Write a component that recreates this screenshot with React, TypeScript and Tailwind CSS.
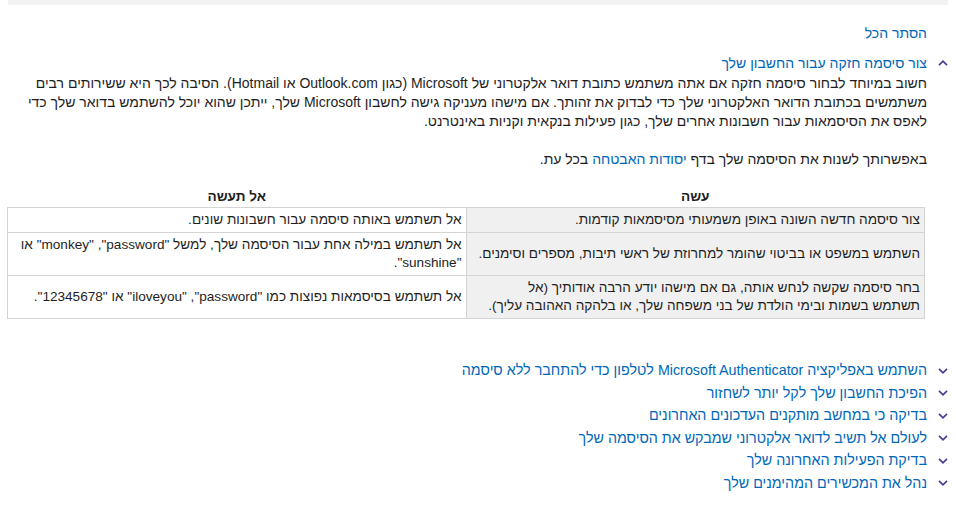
// Security tips page — RTL accordion with a do / don't table.

const topics = [
  "השתמש באפליקציה Microsoft Authenticator לטלפון כדי להתחבר ללא סיסמה",
  "הפיכת החשבון שלך לקל יותר לשחזור",
  "בדיקה כי במחשב מותקנים העדכונים האחרונים",
  "לעולם אל תשיב לדואר אלקטרוני שמבקש את הסיסמה שלך",
  "בדיקת הפעילות האחרונה שלך",
  "נהל את המכשירים המהימנים שלך",
];

// RLM keeps the quoted latin words in right-to-left order
const rlm = "\u200F";

function Chevron({ up }: { up?: boolean }) {
  return (
    <svg width="10" height="6" viewBox="0 0 10 6" className="shrink-0" aria-hidden="true">
      <polyline
        points={up ? "1,5.2 5,1.2 9,5.2" : "1,0.8 5,4.8 9,0.8"}
        fill="none"
        stroke="#4f3a99"
        strokeWidth="1.7"
      />
    </svg>
  );
}

export default function App() {
  return (
    <div
      dir="rtl"
      className="min-h-screen bg-white pb-4 font-['Segoe_UI','Liberation_Sans',sans-serif] text-[14px] text-[#1e1e1e]"
    >
      <div className="mx-[8px] h-[5px] bg-[#f2f2f2]" />

      <div className="pr-[8px] pl-[7px]">
        <div className="mt-[18px] pr-[21px] leading-[20px]">
          <a className="text-[#0067b8]">הסתר הכל</a>
        </div>

        {/* פריט פתוח */}
        <div className="mt-[10px] flex h-[20px] items-center gap-[11px]">
          <Chevron up />
          <span className="text-[14px] text-[#0067b8]">צור סיסמה חזקה עבור החשבון שלך</span>
        </div>

        <div className="pr-[21px]">
          <p className="mt-[1px] leading-[19px]">
            חשוב במיוחד לבחור סיסמה חזקה אם אתה משתמש כתובת דואר אלקטרוני של Microsoft (כגון Outlook.com או Hotmail). הסיבה לכך היא ששירותים רבים
            <br />
            משתמשים בכתובת הדואר האלקטרוני שלך כדי לבדוק את זהותך. אם מישהו מעניקה גישה לחשבון Microsoft שלך, ייתכן שהוא יוכל להשתמש בדואר שלך כדי
            <br />
            לאפס את הסיסמאות עבור חשבונות אחרים שלך, כגון פעילות בנקאית וקניות באינטרנט.
          </p>

          <p className="mt-[19px] leading-[19px]">
            באפשרותך לשנות את הסיסמה שלך בדף <a className="text-[#0067b8]">יסודות האבטחה</a> בכל עת.
          </p>
        </div>

        <table className="mt-[18px] mr-[23px] w-[918px] table-fixed border-collapse text-[13.6px] leading-[18px]">
          <thead>
            <tr className="h-[20px]">
              <th className="pb-[1px] text-center align-bottom font-bold">עשה</th>
              <th className="pb-[1px] text-center align-bottom font-bold">אל תעשה</th>
            </tr>
          </thead>
          <tbody>
            <tr>
              <td className="whitespace-nowrap border border-[#d4d4d4] bg-[#f0f0f0] px-[4px] py-[3px] text-right">
                צור סיסמה חדשה השונה באופן משמעותי מסיסמאות קודמות.
              </td>
              <td className="whitespace-nowrap border border-[#d4d4d4] px-[4px] py-[3px] text-right">
                אל תשתמש באותה סיסמה עבור חשבונות שונים.
              </td>
            </tr>
            <tr>
              <td className="whitespace-nowrap border border-[#d4d4d4] bg-[#f0f0f0] px-[4px] py-[3px] text-right">
                השתמש במשפט או בביטוי שהומר למחרוזת של ראשי תיבות, מספרים וסימנים.
              </td>
              <td className="whitespace-nowrap border border-[#d4d4d4] px-[4px] py-[3px] text-right">
                {`אל תשתמש במילה אחת עבור הסיסמה שלך, למשל "password",${rlm} "monkey" או`}
                <br />
                {`"sunshine".`}
              </td>
            </tr>
            <tr>
              <td className="whitespace-nowrap border border-[#d4d4d4] bg-[#f0f0f0] px-[4px] py-[3px] text-right">
                בחר סיסמה שקשה לנחש אותה, גם אם מישהו יודע הרבה אודותיך (אל
                <br />
                תשתמש בשמות ובימי הולדת של בני משפחה שלך, או בלהקה האהובה עליך).
              </td>
              <td className="whitespace-nowrap border border-[#d4d4d4] px-[4px] py-[3px] text-right">
                {`אל תשתמש בסיסמאות נפוצות כמו "password",${rlm} "iloveyou" או "12345678".`}
              </td>
            </tr>
          </tbody>
        </table>

        <ul className="mt-[41px]">
          {topics.map((t) => (
            <li key={t} className="flex h-[22.5px] items-center gap-[11px]">
              <Chevron />
              <span className="text-[14.3px] text-[#0067b8]">{t}</span>
            </li>
          ))}
        </ul>
      </div>
    </div>
  );
}
